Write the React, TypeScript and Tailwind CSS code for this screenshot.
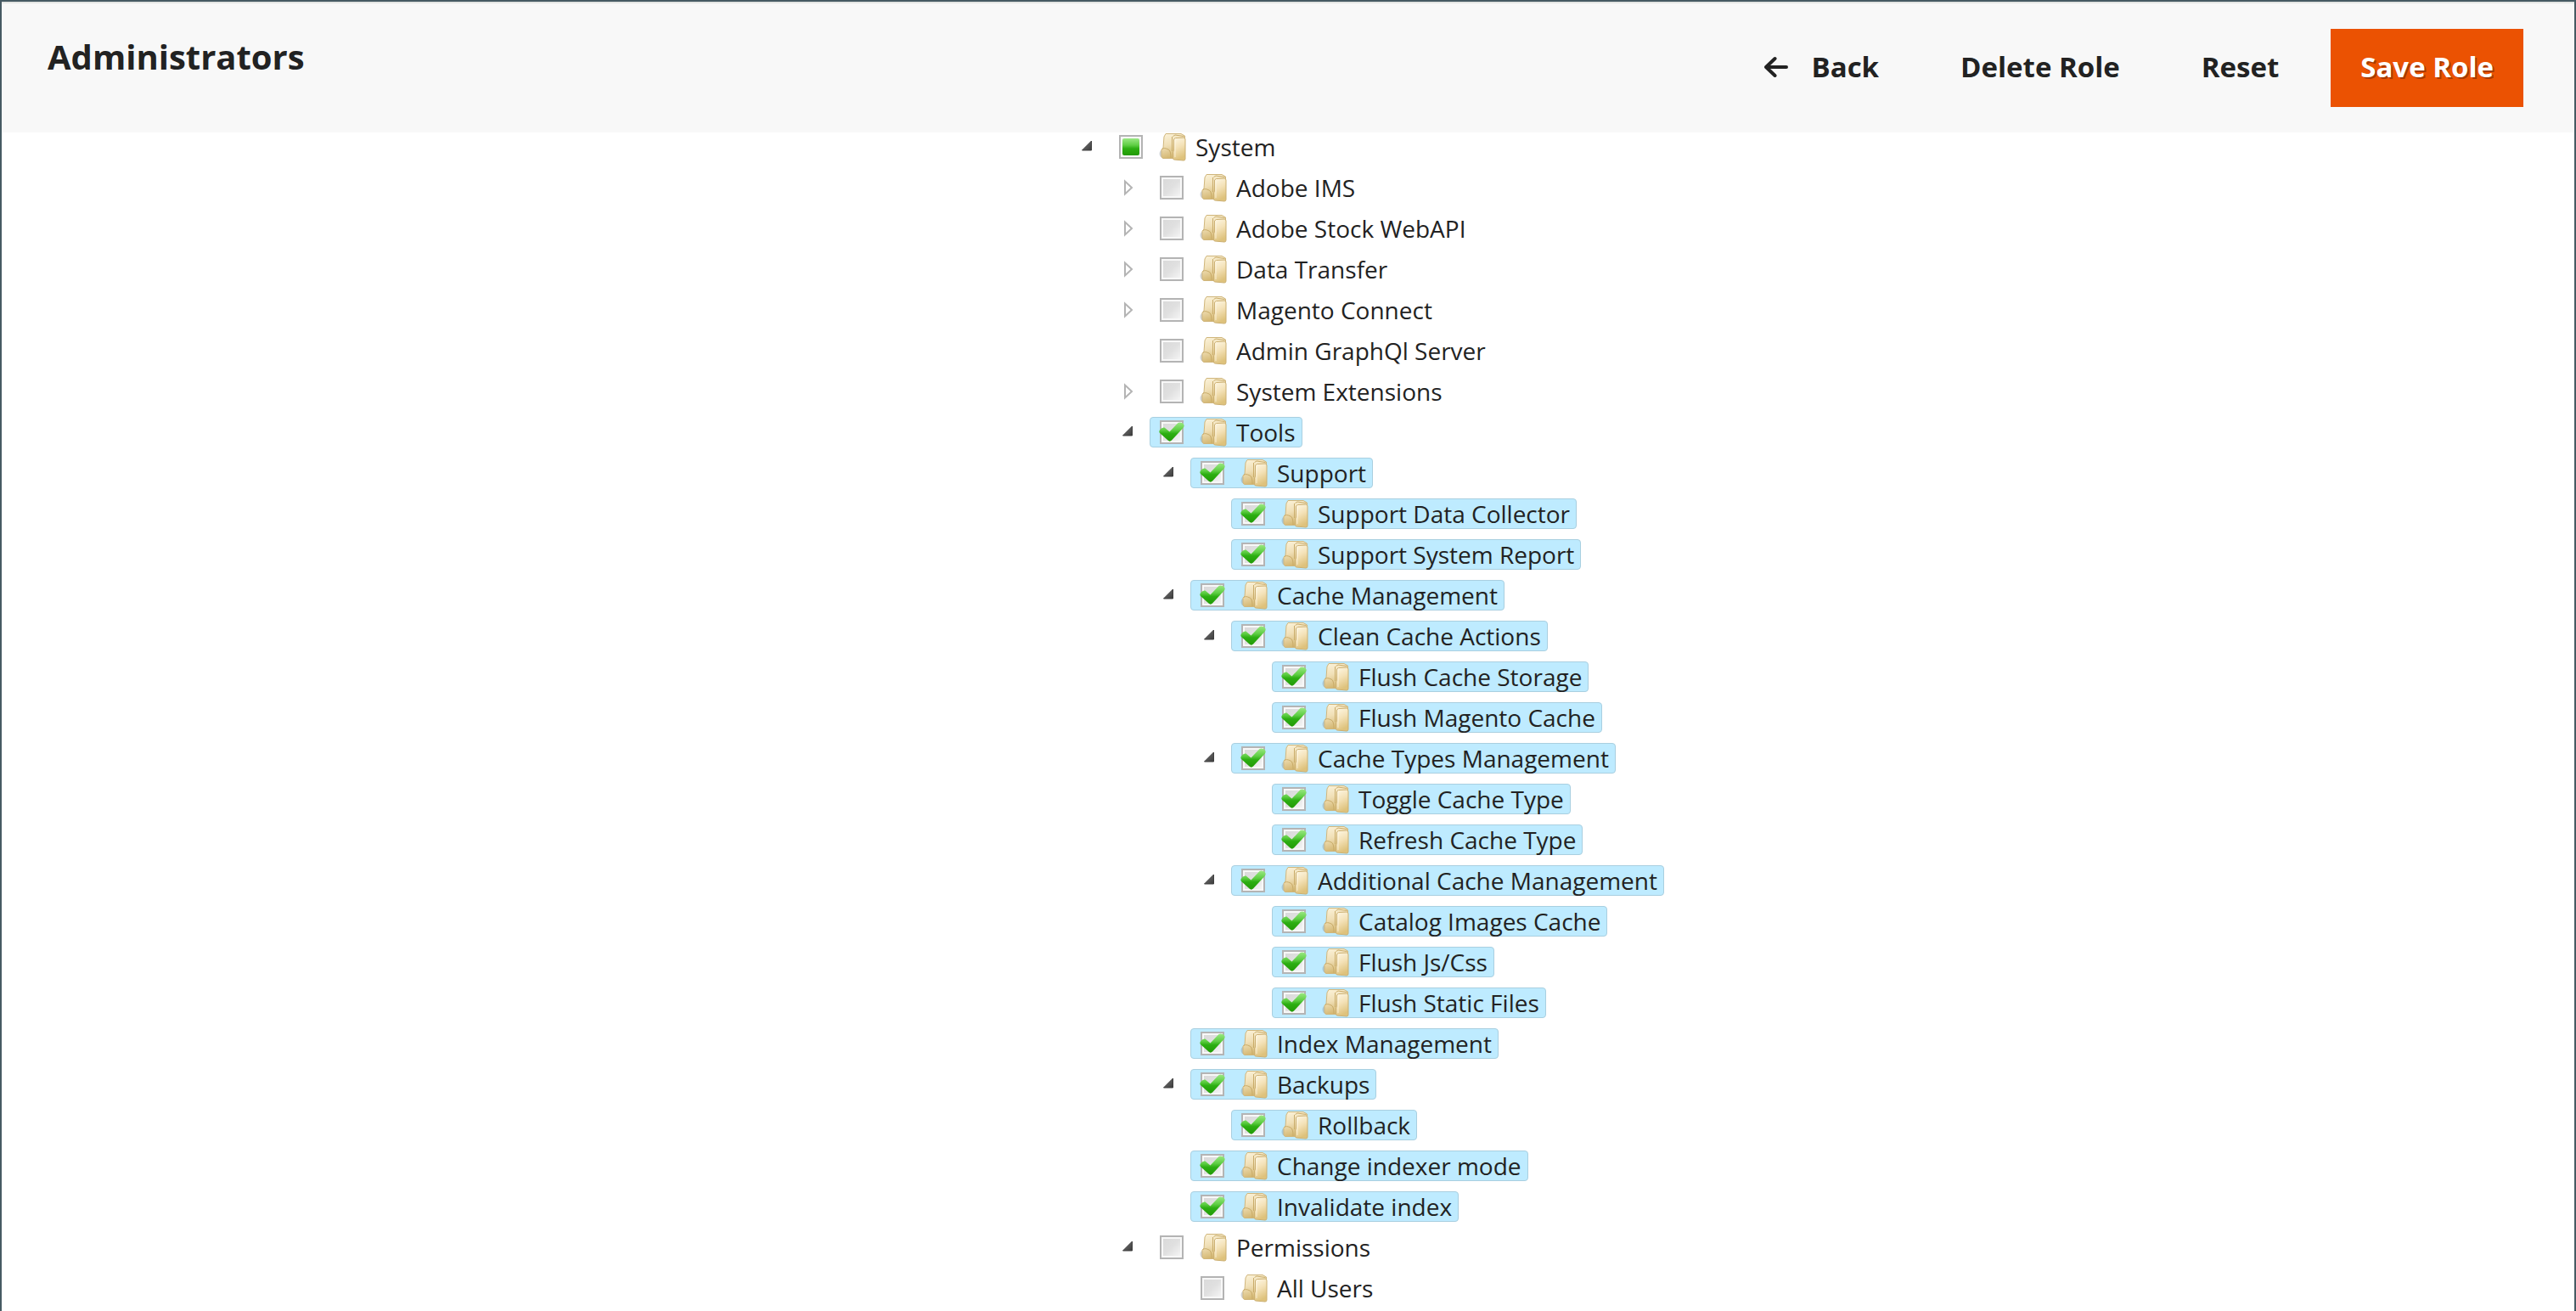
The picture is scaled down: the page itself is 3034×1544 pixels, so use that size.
import type { ReactNode } from "react";

type Check = "off" | "some" | "on";
type Toggle = "open" | "closed" | "leaf";
type TreeNode = { label: string; check: Check; toggle?: Toggle; children?: TreeNode[] };

const on = (label: string, children?: TreeNode[]): TreeNode => ({ label, check: "on", children });
const off = (label: string, toggle: Toggle = "leaf", children?: TreeNode[]): TreeNode => ({ label, check: "off", toggle, children });

const system: TreeNode = {
  label: "System",
  check: "some",
  children: [
    off("Adobe IMS", "closed"),
    off("Adobe Stock WebAPI", "closed"),
    off("Data Transfer", "closed"),
    off("Magento Connect", "closed"),
    off("Admin GraphQl Server"),
    off("System Extensions", "closed"),
    on("Tools", [
      on("Support", [on("Support Data Collector"), on("Support System Report")]),
      on("Cache Management", [
        on("Clean Cache Actions", [on("Flush Cache Storage"), on("Flush Magento Cache")]),
        on("Cache Types Management", [on("Toggle Cache Type"), on("Refresh Cache Type")]),
        on("Additional Cache Management", [on("Catalog Images Cache"), on("Flush Js/Css"), on("Flush Static Files")]),
      ]),
      on("Index Management"),
      on("Backups", [on("Rollback")]),
      on("Change indexer mode"),
      on("Invalidate index"),
    ]),
    off("Permissions", "open", [off("All Users")]),
  ],
};

function Gradients() {
  return (
    <svg className="absolute size-0" aria-hidden="true">
      <defs>
        <linearGradient id="well" x1="0" y1="0" x2="1" y2="1">
          <stop offset="0" stopColor="#dadada" />
          <stop offset="0.5" stopColor="#e0e0e0" />
          <stop offset="1" stopColor="#f4f4f4" />
        </linearGradient>
        <linearGradient id="green" x1="0" y1="0" x2="0" y2="1">
          <stop offset="0" stopColor="#9be884" />
          <stop offset="0.4" stopColor="#5fce44" />
          <stop offset="0.6" stopColor="#2cae12" />
          <stop offset="1" stopColor="#229a06" />
        </linearGradient>
        <linearGradient id="paper" x1="0" y1="0" x2="0.3" y2="1">
          <stop offset="0" stopColor="#fcf4dc" />
          <stop offset="0.5" stopColor="#f0dfb6" />
          <stop offset="1" stopColor="#d3b670" />
        </linearGradient>
        <linearGradient id="front" x1="0" y1="0" x2="0.3" y2="1">
          <stop offset="0" stopColor="#fef8e6" />
          <stop offset="0.5" stopColor="#f4e2b8" />
          <stop offset="1" stopColor="#dec27c" />
        </linearGradient>
        <linearGradient id="dark" x1="0" y1="0" x2="1" y2="1">
          <stop offset="0" stopColor="#777" />
          <stop offset="1" stopColor="#3c3c3c" />
        </linearGradient>
      </defs>
    </svg>
  );
}

function CheckArt({ check }: { check: Check }) {
  return (
    <svg viewBox="0 0 28 28" className="size-7 overflow-visible" aria-hidden="true">
      <rect x="1" y="1" width="26" height="26" fill="#f8f8f8" stroke="#b4b4b4" strokeWidth="2" />
      {check !== "some" && <rect x="4" y="4" width="20" height="20" fill="url(#well)" />}
      {check === "some" && <rect x="4" y="4" width="20" height="20" rx="2" fill="url(#green)" />}
      {check === "on" && (
        <path
          d="M-.5 12.500C0 10.500 3.500 8 5.500 8.500L11.500 13.500L21.500 3C23.500 1.500 28 3 28.500 5.500C29 7 28 8.500 27 9.500L14 23.500C12.500 25 11 25 9.500 23.500L0 15C-.7 14-.8 13.500-.5 12.500Z"
          fill="url(#green)"
        />
      )}
    </svg>
  );
}

function FolderArt() {
  return (
    <svg viewBox="0 0 34 34" className="h-[34px] w-[34px]" aria-hidden="true">
      <ellipse cx="5.500" cy="25" rx="4" ry="4.500" fill="#8a9096" opacity="0.4" />
      <path d="M7 5L9 1.500H27L31.500 4V28L19 30.500H6Q4 30 4 28V20L6 18Z" fill="url(#paper)" stroke="#d0b67c" strokeWidth="1" />
      <path d="M17.500 4.500L20 3L30.500 4.500M16.500 5V22M5 19.500Q7 17.500 12 20Q15 21 15 30" fill="none" stroke="#c9ac6a" strokeWidth="1" />
      <path d="M18.500 8L20.500 6.500L31 6L32 8V31Q32 33 30 33L19 32Q17.500 32 17.500 30V23L18.500 21Z" fill="url(#front)" stroke="#ccb072" strokeWidth="1" />
      <path d="M20 9V29" fill="none" stroke="#fffaea" strokeWidth="1" opacity="0.7" />
    </svg>
  );
}

function ToggleArt({ toggle }: { toggle: Toggle }) {
  return (
    <svg viewBox="0 0 48 36" className="h-9 w-12" aria-hidden="true">
      {toggle === "open" && <path d="M16.500 22L27.500 11V22Z" fill="url(#dark)" stroke="#3e3e3e" strokeWidth="1" />}
      {toggle === "closed" && <path d="M19 10.500V25.500L27 18Z" fill="#fff" stroke="#b4b4b4" strokeWidth="2" />}
    </svg>
  );
}

function Branch({ node }: { node: TreeNode }) {
  const toggle: Toggle = node.toggle ?? (node.children ? "open" : "leaf");
  return (
    <li>
      <div className="flex h-12 items-center">
        {toggle === "leaf" ? (
          <span className="w-12" />
        ) : (
          <button type="button" aria-label={"Toggle " + node.label} aria-expanded={toggle === "open"}>
            <ToggleArt toggle={toggle} />
          </button>
        )}
        <label
          className={
            node.check === "on"
              ? "flex h-9 items-center rounded border border-[#a9cfe0] bg-[#beebff] pr-[7px] pl-[11px]"
              : "flex h-9 items-center border border-transparent pr-[7px] pl-[11px]"
          }
        >
          <input type="checkbox" className="sr-only" defaultChecked={node.check === "on"} />
          <CheckArt check={node.check} />
          <span className="ml-[18px]">
            <FolderArt />
          </span>
          <span className="ml-[10px] text-[28px] leading-9 whitespace-nowrap">{node.label}</span>
        </label>
      </div>
      {node.children && (
        <ul className="pl-12">
          {node.children.map((child) => (
            <Branch key={child.label} node={child} />
          ))}
        </ul>
      )}
    </li>
  );
}

function HeaderButton({ children }: { children: ReactNode }) {
  return (
    <button type="button" className="flex h-[92px] items-center px-[35px] pb-0.5">
      {children}
    </button>
  );
}

export default function App() {
  return (
    <div className="min-h-screen border-x-2 border-t-2 border-[#465a63] bg-white font-['Open_Sans',sans-serif] text-[#222]">
      <Gradients />
      <header className="relative z-10 flex h-[154px] items-start justify-between border-t-2 border-[#e3e5e3] bg-[#f8f8f8] pr-[60px] pl-[54px]">
        <h1 className="pt-[37px] text-[40px] leading-[52px] font-bold">Administrators</h1>
        <div className="flex gap-[26px] pt-[30px] text-[33px] leading-[46px] font-bold">
          <HeaderButton>
            <svg viewBox="0 0 28 26" className="mr-7 h-[26px] w-7" fill="none" stroke="#222" strokeWidth="4" strokeLinecap="round" strokeLinejoin="round" aria-hidden="true">
              <path d="M12.500 3L2 13L12.500 23M2 13H26" />
            </svg>
            Back
          </HeaderButton>
          <HeaderButton>Delete Role</HeaderButton>
          <HeaderButton>Reset</HeaderButton>
          <button type="button" className="h-[92px] bg-[#eb5202] px-[35px] pb-0.5 text-white [text-shadow:2px_2px_0_rgba(0,0,0,0.3)]">
            Save Role
          </button>
        </div>
      </header>
      <main className="-mt-[7px] grid grid-cols-[1256fr_1774fr]">
        <ul className="col-start-2">
          <Branch node={system} />
        </ul>
      </main>
    </div>
  );
}
